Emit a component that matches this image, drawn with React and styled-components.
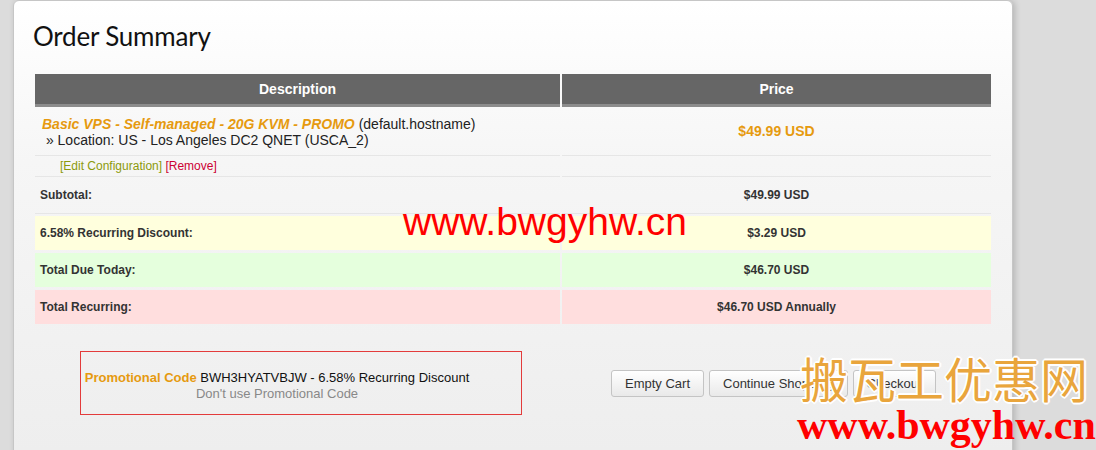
import React from "react";
import styled, { createGlobalStyle } from "styled-components";

const GlobalStyle = createGlobalStyle`
  html, body {
    margin: 0;
    padding: 0;
    background: #dcdcdc;
    font-family: "Liberation Sans", Arial, sans-serif;
  }
`;

const summaryRows = [
  { label: "Subtotal:", value: "$49.99 USD", tone: "plain" },
  { label: "6.58% Recurring Discount:", value: "$3.29 USD", tone: "yellow" },
  { label: "Total Due Today:", value: "$46.70 USD", tone: "green" },
  { label: "Total Recurring:", value: "$46.70 USD Annually", tone: "pink" },
];

const tones = {
  plain: "transparent",
  yellow: "#ffffdd",
  green: "#e5ffdd",
  pink: "#ffdede",
};

const App = () => {
  return (
    <>
      <GlobalStyle />
      <Page>
        <Panel>
          <Title>Order Summary</Title>

          <Table>
            <Row>
              <HeadCell>Description</HeadCell>
              <HeadCell>Price</HeadCell>
            </Row>

            <Row>
              <ItemCell>
                <ProductName>Basic VPS - Self-managed - 20G KVM - PROMO</ProductName>{" "}
                (default.hostname)
                <br />
                &nbsp;» Location: US - Los Angeles DC2 QNET (USCA_2)
              </ItemCell>
              <ItemPrice>$49.99 USD</ItemPrice>
            </Row>

            <Row>
              <LinkCell>
                <EditLink href="#">[Edit Configuration]</EditLink>{" "}
                <RemoveLink href="#">[Remove]</RemoveLink>
              </LinkCell>
              <LinkCell />
            </Row>

            {summaryRows.map((row) => (
              <SummaryRow key={row.label} tone={row.tone}>
                <SummaryLabel tone={row.tone}>{row.label}</SummaryLabel>
                <SummaryValue tone={row.tone}>{row.value}</SummaryValue>
              </SummaryRow>
            ))}
          </Table>

          <Footer>
            <PromoBox>
              <PromoLine>
                <PromoLabel>Promotional Code</PromoLabel> BWH3HYATVBJW - 6.58%
                Recurring Discount
              </PromoLine>
              <PromoRemove href="#">Don't use Promotional Code</PromoRemove>
            </PromoBox>

            <Buttons>
              <Button type="button">Empty Cart</Button>
              <Button type="button">Continue Shopping</Button>
              <Button type="button">Checkout</Button>
            </Buttons>
          </Footer>
        </Panel>

        <SiteMark>www.bwgyhw.cn</SiteMark>
        <BrandMark>搬瓦工优惠网</BrandMark>
        <BrandUrl>www.bwgyhw.cn</BrandUrl>
      </Page>
    </>
  );
};

export default App;

const Page = styled.div`
  position: relative;
  height: 450px;
  overflow: hidden;
  padding-left: 13px;
  background: #dcdcdc;
`;

const Panel = styled.div`
  width: 1000px;
  height: 520px;
  box-sizing: border-box;
  padding: 18px 21px 0 21px;
  border: 1px solid #c6c6c6;
  border-radius: 6px 6px 0 0;
  background: linear-gradient(#ffffff 0, #f6f6f6 160px, #f2f2f2 300px, #eeeeee 450px);
  box-shadow: 2px 0 6px rgba(0, 0, 0, 0.18);
`;

const Title = styled.h1`
  margin: 0 0 21px -2px;
  font-family: Lato, "Open Sans", sans-serif;
  font-weight: 400;
  font-size: 26px;
  line-height: 34px;
  letter-spacing: -0.2px;
  color: #111;
`;

const Table = styled.div`
  width: 956px;
  font-size: 14px;
  color: #222;
`;

const Row = styled.div`
  display: grid;
  grid-template-columns: 525px 429px;
  column-gap: 2px;
`;

const HeadCell = styled.div`
  height: 30px;
  line-height: 30px;
  background: #666666;
  border-bottom: 3px solid #8c8c8c;
  color: #fff;
  font-weight: bold;
  font-size: 14px;
  text-align: center;
`;

const ItemCell = styled.div`
  padding: 9px 7px 7px;
  line-height: 16px;
  border-bottom: 1px solid #e6e6e6;
`;

const ProductName = styled.strong`
  font-style: italic;
  color: #e69a0f;
`;

const ItemPrice = styled.div`
  display: flex;
  align-items: center;
  justify-content: center;
  border-bottom: 1px solid #e6e6e6;
  color: #e69a0f;
  font-weight: bold;
`;

const LinkCell = styled.div`
  height: 20px;
  line-height: 20px;
  padding-left: 25px;
  font-size: 12px;
  border-bottom: 1px solid #e6e6e6;
`;

const EditLink = styled.a`
  color: #8c9a0c;
  text-decoration: none;
`;

const RemoveLink = styled.a`
  color: #cc0033;
  text-decoration: none;
`;

const SummaryRow = styled(Row)`
  margin-top: ${(p) => (p.tone === "plain" ? "0" : p.tone === "yellow" ? "2px" : "3px")};
`;

const SummaryLabel = styled.div`
  height: ${(p) => (p.tone === "plain" ? "36px" : "34px")};
  line-height: ${(p) => (p.tone === "plain" ? "36px" : "34px")};
  padding-left: 5px;
  background: ${(p) => tones[p.tone]};
  border-bottom: ${(p) => (p.tone === "plain" ? "1px solid #e6e6e6" : "0")};
  font-size: 12px;
  font-weight: bold;
  color: #333;
`;

const SummaryValue = styled(SummaryLabel)`
  padding-left: 0;
  text-align: center;
`;

const Footer = styled.div`
  display: flex;
  align-items: center;
  margin-top: 27px;
`;

const PromoBox = styled.div`
  width: 442px;
  height: 64px;
  box-sizing: border-box;
  margin-left: 45px;
  padding: 5px 48px 0 0;
  border: 1px solid #e33b3b;
  display: flex;
  flex-direction: column;
  justify-content: center;
  align-items: center;
  text-align: center;
  font-size: 13px;
  line-height: 16px;
  color: #111;
`;

const PromoLine = styled.div`
  white-space: nowrap;
`;

const PromoLabel = styled.strong`
  color: #e69a0f;
`;

const PromoRemove = styled.a`
  color: #888;
  text-decoration: none;
`;

const Buttons = styled.div`
  display: flex;
  gap: 5px;
  margin-left: 89px;
`;

const Button = styled.button`
  height: 27px;
  padding: 0 13px;
  border: 1px solid #c4c4c4;
  border-radius: 3px;
  background: linear-gradient(#ffffff, #e9e9e9);
  font-family: "Liberation Sans", Arial, sans-serif;
  font-size: 13px;
  color: #333;
`;

const SiteMark = styled.div`
  position: absolute;
  left: 403px;
  top: 202px;
  font-family: "Liberation Sans", Arial, sans-serif;
  font-size: 39px;
  line-height: 39px;
  color: #ff0000;
`;

const BrandMark = styled.div`
  position: absolute;
  left: 800px;
  top: 353px;
  font-family: "Noto Sans CJK SC", sans-serif;
  font-size: 48px;
  line-height: 48px;
  color: #e9a53c;
  text-shadow: -2px 0 #fff, 2px 0 #fff, 0 -2px #fff, 0 2px #fff,
    -1px -1px #fff, 1px 1px #fff, -1px 1px #fff, 1px -1px #fff;
`;

const BrandUrl = styled.div`
  position: absolute;
  left: 797px;
  top: 404px;
  font-family: "Liberation Serif", "Times New Roman", serif;
  font-weight: bold;
  font-size: 42px;
  line-height: 42px;
  color: #ff0000;
`;
